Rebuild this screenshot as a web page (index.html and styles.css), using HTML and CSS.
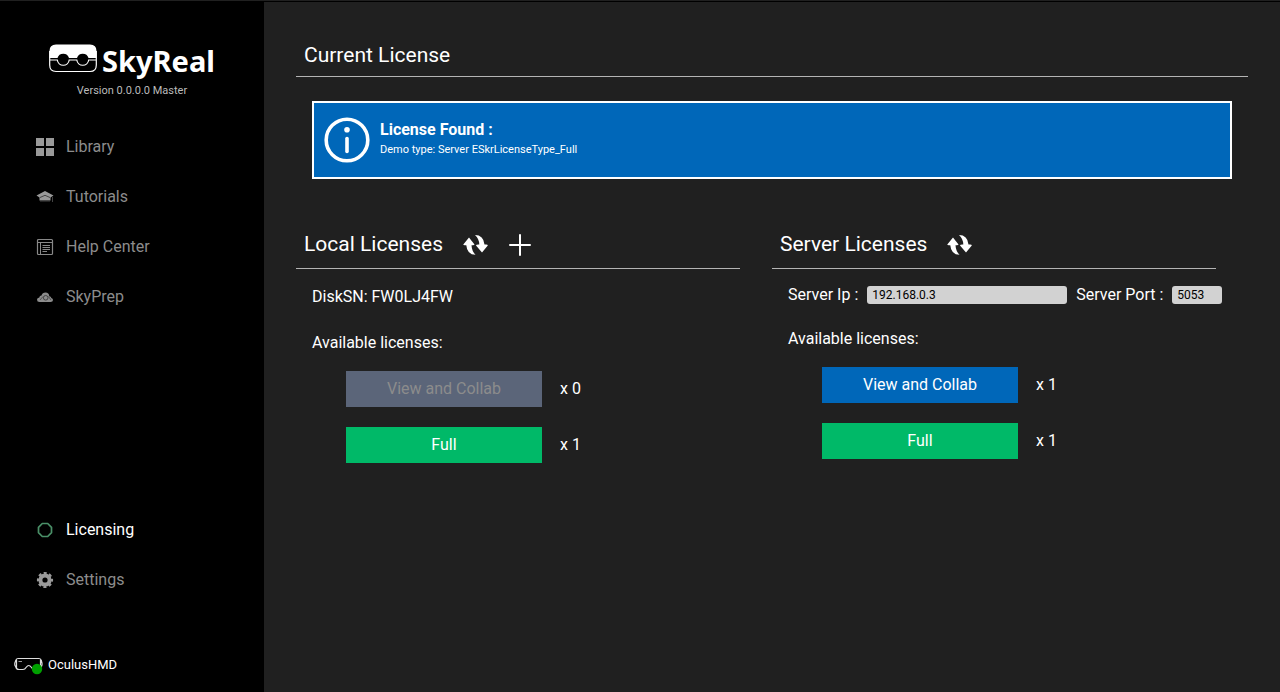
FILE: index.html
```html
<!DOCTYPE html>
<html lang="en">
<head>
<meta charset="utf-8">
<title>SkyReal - Licensing</title>
<link rel="stylesheet" href="styles.css">
</head>
<body>
<div class="app">
  <aside class="sidebar">
    <div class="brand">
      <svg class="brand-mark" width="48" height="30" viewBox="0 0 48 30" aria-hidden="true">
        <path d="M.5 14V7Q.5 .5 7 .5H41Q47.500 .5 47.500 7V14H39.500A6 6 0 0 0 28 14H20A6 6 0 0 0 8.500 14Z" fill="#fff"/>
        <path d="M.7 16H8.300A6 6 0 0 0 20.200 16H27.800A6 6 0 0 0 39.700 16H47.300V21Q47.300 27.500 41 27.500H7Q.7 27.500 .7 21ZM.7 16V7M47.300 16V7" fill="none" stroke="#fff" stroke-width="1.200"/>
      </svg>
      <span class="brand-name">SkyReal</span>
    </div>
    <p class="version">Version 0.0.0.0 Master</p>
    <nav class="nav">
      <a class="nav-item" href="#library">
        <svg class="nav-icon" viewBox="0 0 18 18"><path d="M0 0H8V8H0ZM10 0H18V8H10ZM0 10H8V18H0ZM10 10H18V18H10Z" fill="#999"/></svg>
        Library
      </a>
      <a class="nav-item" href="#tutorials">
        <svg class="nav-icon" viewBox="0 0 18 18"><path d="M9 3L17.500 7.500L14.500 9.500V12.500H3.500V9.500L.5 7.500Z" fill="#999"/><path d="M4 9.500L9 7.300L14 9.500" fill="none" stroke="#444"/><path d="M4 13H14M16.500 9V14" fill="none" stroke="#444" stroke-width="1"/></svg>
        Tutorials
      </a>
      <a class="nav-item" href="#help">
        <svg class="nav-icon" viewBox="0 0 18 18"><rect x="1.500" y="1.500" width="15" height="15" rx="1" fill="none" stroke="#888" stroke-width="1.200"/><path d="M1.500 4.500H16.500M4.500 4.500V16.500M6.500 7.500H14M6.500 9.500H14M6.500 11.500H14M6.500 13.500H11" stroke="#888" fill="none"/></svg>
        Help Center
      </a>
      <a class="nav-item" href="#skyprep">
        <svg class="nav-icon" viewBox="0 0 18 18"><path d="M3.500 14Q1 14 1 11.800Q1 9.800 3.300 9.500Q3.500 7.500 5.500 7.500Q6.300 4.500 9.500 4.500Q13 4.500 13.300 8.200Q15 8.200 15.300 10Q17 10.300 17 12Q17 14 14.500 14Z" fill="#8c8c8c"/><path d="M4 12L7 8.500M12.500 8.500L15 12" stroke="#555" fill="none"/><circle cx="9.700" cy="9.800" r="2.300" fill="none" stroke="#444"/></svg>
        SkyPrep
      </a>
    </nav>
    <nav class="nav nav-bottom">
      <a class="nav-item active" href="#licensing" aria-current="page">
        <svg class="nav-icon" viewBox="0 0 18 18"><path d="M6.300 2.500H11.700L15.500 6.300V11.700L11.700 15.500H6.300L2.500 11.700V6.300Z" fill="none" stroke="#4a9068" stroke-width="1.700" stroke-linejoin="round"/></svg>
        Licensing
      </a>
      <a class="nav-item" href="#settings">
        <svg class="nav-icon" viewBox="0 0 18 18"><circle cx="9" cy="9" r="4.600" fill="none" stroke="#999" stroke-width="4"/><circle cx="9" cy="9" r="6.800" fill="none" stroke="#999" stroke-width="2.600" stroke-dasharray="2.900 2.440" stroke-dashoffset="1.450"/></svg>
        Settings
      </a>
    </nav>
    <div class="device">
      <svg width="30" height="20" viewBox="0 0 30 20" aria-hidden="true">
        <path d="M4 3.500H25Q27 3.500 27.300 5.500L28 8V10L27.300 12Q26 14.500 24 14.500H20.500Q18.500 14.500 17.500 12.500Q16 10.500 14.800 10.500Q13.500 10.500 12 12.500Q11 14.500 9 14.500H5Q2.500 14.500 1.800 12L.8 10V8L1.800 5.500Q2 3.500 4 3.500ZM2.500 4.500V13M26.500 4.500V12" fill="none" stroke="#ddd" stroke-width="1.200"/>
        <path d="M4.500 6.500H8" stroke="#999"/>
        <circle cx="23" cy="14" r="5.200" fill="#00a000"/>
      </svg>
      <span>OculusHMD</span>
    </div>
  </aside>

  <main class="content">
    <section>
      <header class="section-head section-head-top"><h1>Current License</h1></header>
      <div class="notice" role="status">
        <svg width="46" height="46" viewBox="0 0 46 46" aria-hidden="true">
          <circle cx="23" cy="23" r="20.800" fill="none" stroke="#fff" stroke-width="3.600"/>
          <circle cx="23" cy="12.700" r="2.800" fill="#fff"/>
          <path d="M23 21.500V34.500" stroke="#fff" stroke-width="3.600" stroke-linecap="round"/>
        </svg>
        <div>
          <strong class="notice-title">License Found :</strong>
          <p class="notice-text">Demo type: Server ESkrLicenseType_Full</p>
        </div>
      </div>
    </section>

    <div class="columns">
      <section class="column">
        <header class="section-head">
          <h2>Local Licenses</h2>
          <button class="icon-button" type="button" aria-label="Refresh local licenses">
            <svg width="26" height="22" viewBox="0 0 26 22"><path d="M6 3.500L11.500 10.500Q11.500 11.500 8.500 11.200Q8.800 17 12.500 20.800Q4 20.500 3.300 11.200Q0 11.500 .3 10.500Z" fill="#fff"/><path d="M12 1Q20.500 1 21.500 10.500Q25 10 24.800 11.500L19 18.500L13 11.500Q13 10.300 16.300 10.500Q16.300 5 12 1Z" fill="#fff"/></svg>
          </button>
          <button class="icon-button" type="button" aria-label="Add license">
            <svg width="22" height="22" viewBox="0 0 22 22"><path d="M11 1V21M1 11H21" stroke="#fff" stroke-width="2" stroke-linecap="round"/></svg>
          </button>
        </header>
        <div class="column-body">
          <p class="row">DiskSN: FW0LJ4FW</p>
          <p class="row available">Available licenses:</p>
          <ul class="licenses">
            <li><button class="license" type="button" disabled>View and Collab</button><span>x 0</span></li>
            <li><button class="license license-full" type="button">Full</button><span>x 1</span></li>
          </ul>
        </div>
      </section>

      <section class="column">
        <header class="section-head">
          <h2>Server Licenses</h2>
          <button class="icon-button" type="button" aria-label="Refresh server licenses">
            <svg width="26" height="22" viewBox="0 0 26 22"><path d="M6 3.500L11.500 10.500Q11.500 11.500 8.500 11.200Q8.800 17 12.500 20.800Q4 20.500 3.300 11.200Q0 11.500 .3 10.500Z" fill="#fff"/><path d="M12 1Q20.500 1 21.500 10.500Q25 10 24.800 11.500L19 18.500L13 11.500Q13 10.300 16.300 10.500Q16.300 5 12 1Z" fill="#fff"/></svg>
          </button>
        </header>
        <div class="column-body server-body">
          <div class="row server-row">
            <label for="ip">Server Ip :</label>
            <input class="field field-ip" id="ip" type="text" value="192.168.0.3">
            <label for="port">Server Port :</label>
            <input class="field field-port" id="port" type="text" value="5053">
          </div>
          <p class="row available">Available licenses:</p>
          <ul class="licenses">
            <li><button class="license" type="button">View and Collab</button><span>x 1</span></li>
            <li><button class="license license-full" type="button">Full</button><span>x 1</span></li>
          </ul>
        </div>
      </section>
    </div>
  </main>
</div>
</body>
</html>
```
FILE: styles.css
```css
* { box-sizing: border-box; }

body {
  margin: 0;
  background: #202020;
  color: #fff;
  font: 16px/20px Roboto, "Liberation Sans", sans-serif;
}

h1, h2, p, ul { margin: 0; padding: 0; }
button, input { font: inherit; }
svg { display: block; flex: none; }

.app {
  display: flex;
  min-height: 100vh;
  padding-top: 1px;
}

.sidebar {
  display: flex;
  flex: 0 0 264px;
  flex-direction: column;
  padding: 40px 0 17px;
  background: #000;
}

.brand {
  display: flex;
  align-items: center;
  justify-content: center;
  gap: 5px;
  height: 40px;
}

.brand-mark { margin-bottom: 4px; }
.brand-name { font: bold 29px/40px "Noto Sans", sans-serif; }

.version {
  color: #bbb;
  font-size: 11px;
  text-align: center;
}

.nav { margin-top: 21px; }
.nav-bottom { margin-top: auto; }

.nav-item {
  display: flex;
  align-items: center;
  gap: 12px;
  height: 50px;
  padding-left: 36px;
  color: #8c8c8c;
  text-decoration: none;
}

.nav-item.active { color: #fff; }
.nav-icon { width: 18px; height: 18px; }

.device {
  display: flex;
  align-items: center;
  gap: 4px;
  margin-top: 50px;
  padding-left: 14px;
  font-size: 13px;
}

.content {
  flex: 1;
  min-width: 0;
  padding: 0 32px;
  border-top: 1px solid #000;
}

.section-head {
  display: flex;
  align-items: center;
  gap: 20px;
  height: 50px;
  padding-left: 8px;
  border-bottom: 1px solid #b4b4b4;
}

.section-head-top { height: 43px; margin-top: 32px; }

h1, h2 { font-size: 21px; font-weight: 400; line-height: 28px; }

.notice {
  display: flex;
  align-items: center;
  gap: 10px;
  margin: 24px 16px 0;
  min-height: 78px;
  padding: 0 10px;
  border: 2px solid #fff;
  background: #0067b9;
}

.notice-title { display: block; font-weight: 700; }
.notice-text { font-size: 11px; }

.columns {
  display: grid;
  grid-template-columns: 1fr 1fr;
  margin-top: 40px;
}

.column .section-head { margin-right: 32px; }

.icon-button {
  padding: 2px 0 0;
  border: 0;
  background: none;
  cursor: pointer;
}

.column-body { padding: 18px 0 0 16px; }
.server-body { padding-top: 16px; }
.available { margin-top: 26px; }
.server-body .available { margin-top: 24px; }

.server-row { display: flex; align-items: center; gap: 9px; white-space: nowrap; }

.field {
  height: 18px;
  padding: 0 5px;
  border: 0;
  border-radius: 3px;
  background: #d2d2d2;
  color: #000;
  font-size: 12px;
}

.field-ip { width: 200px; }
.field-port { width: 50px; }

.licenses {
  display: grid;
  gap: 20px;
  margin-top: 18px;
  padding-left: 34px;
  list-style: none;
}

.licenses li { display: flex; align-items: center; gap: 18px; }

.license {
  width: 196px;
  height: 36px;
  border: 0;
  background: #0067b9;
  color: #fff;
}

.license-full { background: #00b968; }
.license:disabled { background: #5b6579; color: #8c8c8c; }
```
